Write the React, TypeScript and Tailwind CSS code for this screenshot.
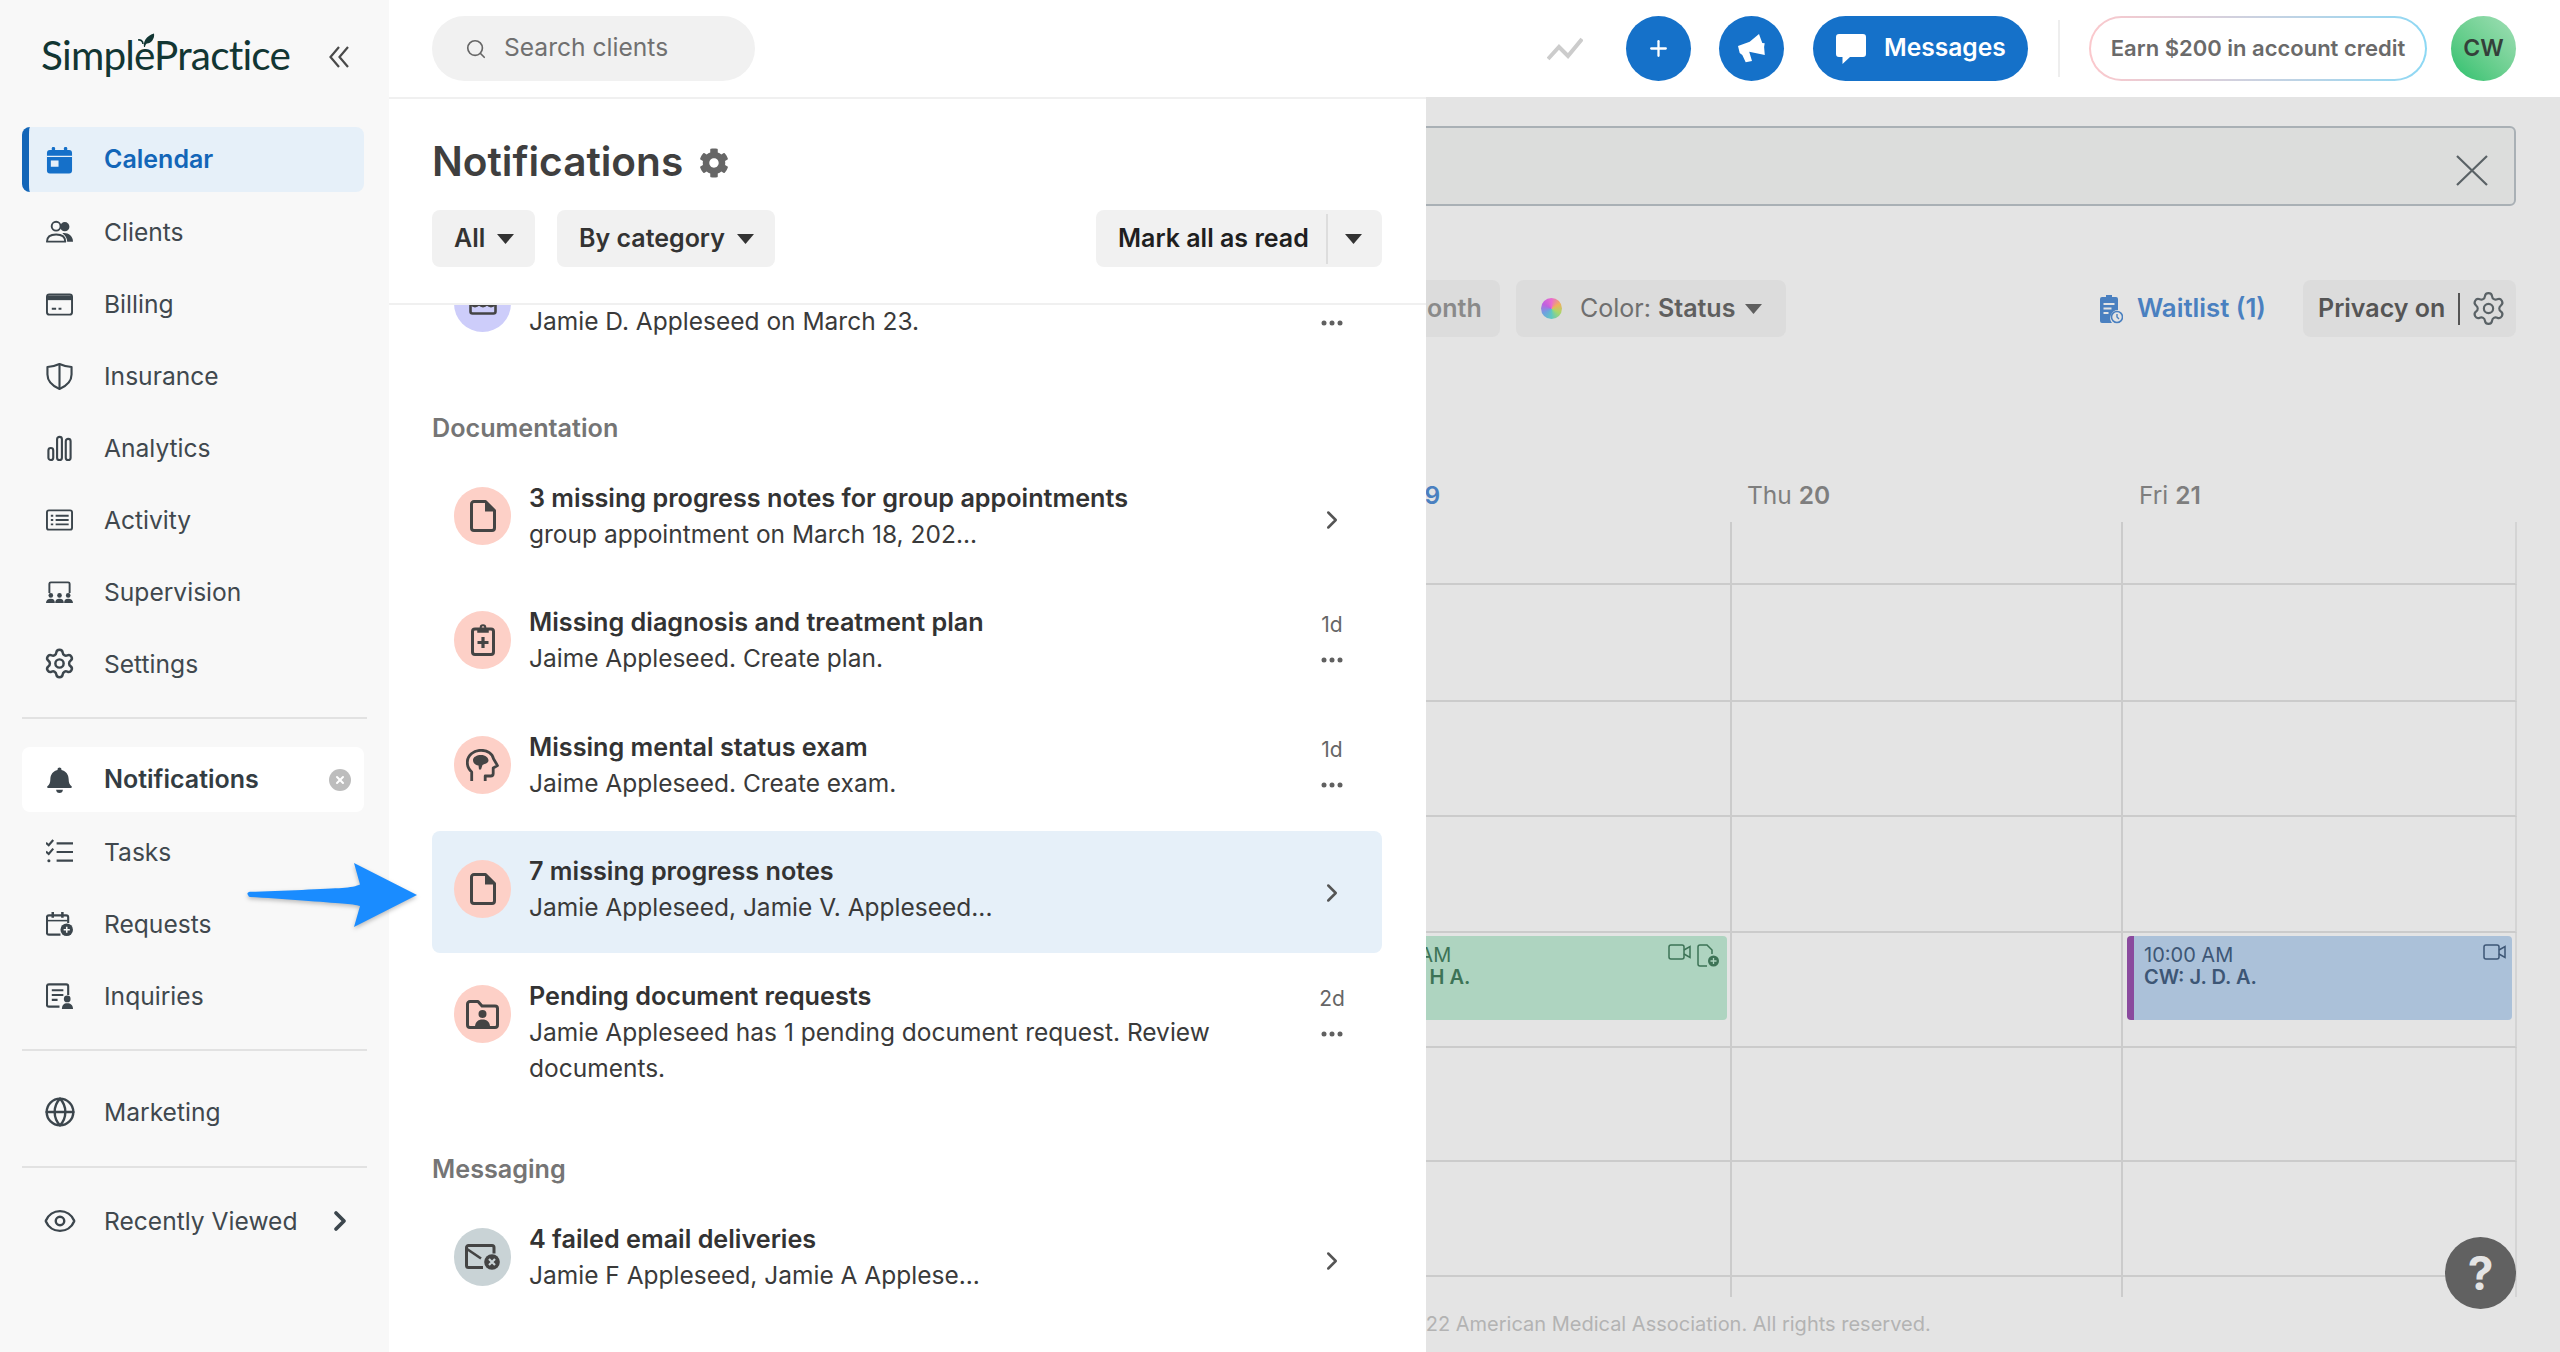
import React from "react";
import { ChevronRight, Eye, Globe, Search, Settings, Plus, X } from "lucide-react";
import { FaCog } from "react-icons/fa";

const INK = "#3c464d";

function Svg({ children, w = 28, h = 28, vb = "0 0 28 28", cls = "" }: { children: React.ReactNode; w?: number; h?: number; vb?: string; cls?: string }) {
  return (
    <svg width={w} height={h} viewBox={vb} fill="none" className={cls}>
      {children}
    </svg>
  );
}

const CalendarIcon = () => (
  <Svg>
    <rect x="1" y="3.5" width="26" height="24.5" rx="3" fill="#1570c9" />
    <rect x="6" y="0.5" width="3.4" height="6" rx="1.2" fill="#1570c9" />
    <rect x="18.6" y="0.5" width="3.4" height="6" rx="1.2" fill="#1570c9" />
    <rect x="1" y="9.6" width="26" height="1.3" fill="#e6f0f9" />
    <rect x="5" y="14.5" width="8" height="6.5" fill="#e6f0f9" />
  </Svg>
);
const ClientsIcon = () => (
  <Svg>
    <circle cx="10.5" cy="8" r="4.6" stroke={INK} strokeWidth="2" />
    <path d="M1 24c0-5 4-7.5 9.500-7.500s9.500 2.500 9.500 7.500z" stroke={INK} strokeWidth="2" strokeLinejoin="round" />
    <circle cx="19.500" cy="8.500" r="4.800" fill={INK} />
    <path d="M17 15.200c5.500-.8 11 2.300 11 8.800h-6c0-3.400-2-6.800-5-8.800z" fill={INK} />
  </Svg>
);
const BillingIcon = () => (
  <Svg>
    <rect x="1" y="4" width="26" height="21" rx="2.500" stroke={INK} strokeWidth="2" />
    <rect x="1" y="5" width="26" height="5" fill={INK} />
    <path d="M6 19h4.500M13 19h3" stroke={INK} strokeWidth="2" />
  </Svg>
);
const ShieldIcon = () => (
  <Svg>
    <path d="M14 1.500c4 1.800 8 2.800 12.500 3.200v7.800c0 7-5.500 12-12.500 15C7 24.500 1.500 19.500 1.500 12.500V4.700C6 4.300 10 3.300 14 1.500z" stroke={INK} strokeWidth="2.200" strokeLinejoin="round" />
    <path d="M14 2v25" stroke={INK} strokeWidth="2.200" />
  </Svg>
);
const AnalyticsIcon = () => (
  <Svg>
    <rect x="2.500" y="14" width="5" height="12.500" rx="2.500" stroke={INK} strokeWidth="2.200" />
    <rect x="11.500" y="2.500" width="5" height="24" rx="2.500" stroke={INK} strokeWidth="2.200" />
    <rect x="20.500" y="4.500" width="5" height="22" rx="2.500" stroke={INK} strokeWidth="2.200" />
  </Svg>
);
const ActivityIcon = () => (
  <Svg>
    <rect x="1" y="4" width="26" height="20" rx="2" stroke={INK} strokeWidth="2" />
    <path d="M5 9.500h2.500M5 14h2.500M5 18.500h2.500M10 9.500h13.500M10 14h13.500M10 18.500h13.500" stroke={INK} strokeWidth="2" />
  </Svg>
);
const SupervisionIcon = () => (
  <Svg>
    <path d="M3.500 15V5.500a1.500 1.500 0 0 1 1.500-1.500h18a1.500 1.500 0 0 1 1.500 1.500V15" stroke={INK} strokeWidth="2" />
    <circle cx="5" cy="17.500" r="2.400" fill={INK} />
    <circle cx="14" cy="17.500" r="2.400" fill={INK} />
    <circle cx="23" cy="17.500" r="2.400" fill={INK} />
    <path d="M0 25.500c0-3 2-4.500 5-4.500s4.200 1.500 4.200 4.500zM9.500 25.500c0-3 1.500-4.500 4.500-4.500s4.500 1.500 4.500 4.500zM18.800 25.500c0-3 1.200-4.500 4.200-4.500s5 1.500 5 4.500z" fill={INK} />
  </Svg>
);
const BellIcon = () => (
  <Svg>
    <path d="M14 1c1.100 0 2 .8 2 1.900v.8c4.800 1 7.500 5 7.500 9.600 0 3.500 1 5.600 3 7.200.7.600.3 1.800-.7 1.800H2.200c-1 0-1.400-1.200-.7-1.800 2-1.600 3-3.700 3-7.200 0-4.600 2.700-8.600 7.500-9.600v-.8C12 1.800 12.900 1 14 1z" fill={INK} />
    <path d="M10.500 24h7c0 2-1.500 3.500-3.500 3.500s-3.500-1.500-3.500-3.500z" fill={INK} />
  </Svg>
);
const TasksIcon = () => (
  <Svg>
    <path d="M0 4.500l2.800 2.500L7.500 1.500M0 13.500l2.800 2.500 4.700-5.500" stroke={INK} strokeWidth="2.200" />
    <circle cx="3" cy="23" r="1.600" fill={INK} />
    <path d="M11 5h17M11 14h17M11 23h17" stroke={INK} strokeWidth="2.200" />
  </Svg>
);
const RequestsIcon = () => (
  <Svg>
    <path d="M15 25H3a2 2 0 0 1-2-2V7a2 2 0 0 1 2-2h18a2 2 0 0 1 2 2v6" stroke={INK} strokeWidth="2.200" />
    <path d="M7 1.500v6M17 1.500v6" stroke={INK} strokeWidth="2.600" />
    <path d="M1.500 10.500h21" stroke={INK} strokeWidth="1.600" />
    <circle cx="21.500" cy="20" r="6.500" fill={INK} />
    <path d="M21.500 16.800v6.400M18.300 20h6.400" stroke="#f8f8f8" strokeWidth="1.600" />
  </Svg>
);
const InquiriesIcon = () => (
  <Svg>
    <path d="M14 25H3a2 2 0 0 1-2-2V4a2 2 0 0 1 2-2h18a2 2 0 0 1 2 2v9" stroke={INK} strokeWidth="2.200" />
    <path d="M6 8h12M6 13h12M6 18h6" stroke={INK} strokeWidth="2.200" />
    <circle cx="22" cy="17" r="3.500" fill={INK} />
    <path d="M16.500 27.500c0-4 2-6 5.500-6s6 2 6 6z" fill={INK} />
  </Svg>
);

function NavRow({ icon, label, active, current, trailing }: { icon: React.ReactNode; label: string; active?: boolean; current?: boolean; trailing?: React.ReactNode }) {
  const base = active
    ? "bg-[#e6f0f9] border-l-[7px] border-[#1366b8] text-[#1366b8] font-semibold text-[25px] pl-[17px]"
    : current
    ? "bg-white text-[#333c42] font-semibold text-[25px] pl-[24px]"
    : "text-[#40484e] text-[24.600px] pl-[24px]";
  return (
    <div className={`flex items-center h-[65px] rounded-[8px] pr-[13px] ${base}`}>
      <span className="w-[27px] h-[28px] flex items-center justify-center shrink-0">{icon}</span>
      <span className="ml-[31px] pt-[1px] flex-1 whitespace-nowrap">{label}</span>
      {trailing}
    </div>
  );
}

function Sidebar() {
  return (
    <aside className="w-[389px] shrink-0 bg-[#f8f8f8] h-full pl-[22px] pr-[22px] relative">
      <div className="h-[127px] flex items-start pt-[27px] pl-[19px] relative">
        <span className="relative text-[40.500px] leading-[56px] text-[#123633] font-['Lato',sans-serif] tracking-[-0.8px] whitespace-nowrap">
          SimplePractice
          <svg width="17" height="15" viewBox="0 0 17 15" className="absolute left-[97px] top-[6px]">
            <path d="M6 14C5 9 8 3 16 .5c1 5-3 10-7 10C9 10 7 12 7 14z" fill="#123633" />
            <path d="M0 7c2-.5 5 .5 5 4" stroke="#123633" strokeWidth="1.600" fill="none" />
          </svg>
        </span>
        <svg width="20" height="22" viewBox="0 0 20 22" fill="none" className="absolute left-[307px] top-[46px]">
          <path d="M10 1L1.500 11 10 21M19 1l-8.500 10L19 21" stroke="#4a4a4a" strokeWidth="2.200" />
        </svg>
      </div>
      <nav className="flex flex-col gap-[7px] w-[342px]">
        <NavRow active icon={<CalendarIcon />} label="Calendar" />
        <NavRow icon={<ClientsIcon />} label="Clients" />
        <NavRow icon={<BillingIcon />} label="Billing" />
        <NavRow icon={<ShieldIcon />} label="Insurance" />
        <NavRow icon={<AnalyticsIcon />} label="Analytics" />
        <NavRow icon={<ActivityIcon />} label="Activity" />
        <NavRow icon={<SupervisionIcon />} label="Supervision" />
        <NavRow icon={<Settings size={33} strokeWidth={1.800} color={INK} className="shrink-0" />} label="Settings" />
      </nav>
      <div className="w-[345px] h-[2px] bg-[#e2e2e2] mt-[21px] mb-[28px]" />
      <nav className="flex flex-col gap-[7px] w-[342px]">
        <NavRow
          current
          icon={<BellIcon />}
          label="Notifications"
          trailing={
            <span className="w-[22px] h-[22px] rounded-full bg-[#bdbdbd] flex items-center justify-center">
              <X size={12} strokeWidth={4} color="#ffffff" />
            </span>
          }
        />
        <NavRow icon={<TasksIcon />} label="Tasks" />
        <NavRow icon={<RequestsIcon />} label="Requests" />
        <NavRow icon={<InquiriesIcon />} label="Inquiries" />
      </nav>
      <div className="w-[345px] h-[2px] bg-[#e2e2e2] mt-[21px] mb-[28px]" />
      <div className="w-[342px]">
        <NavRow icon={<Globe size={32} strokeWidth={1.800} color={INK} className="shrink-0" />} label="Marketing" />
      </div>
      <div className="w-[345px] h-[2px] bg-[#e2e2e2] mt-[22px] mb-[20px]" />
      <div className="w-[342px]">
        <NavRow icon={<Eye size={34} strokeWidth={1.700} color={INK} className="shrink-0" />} label="Recently Viewed" trailing={<ChevronRight size={32} strokeWidth={2.800} color={INK} className="-mr-[5px]" />} />
      </div>
    </aside>
  );
}

function TopBar() {
  return (
    <header className="h-[97px] shrink-0 bg-white flex items-center pl-[43px] pr-[44px]">
      <div className="w-[323px] h-[65px] rounded-full bg-[#f1f1f1] flex items-center pl-[33px] text-[24.600px] text-[#707070]">
        <Search size={22} strokeWidth={1.800} color="#666666" />
        <span className="ml-[17px] pb-[2px]">Search clients</span>
      </div>
      <div className="ml-auto flex items-center">
        <svg width="36" height="24" viewBox="0 0 36 24" fill="none" className="mr-[43px]">
          <path d="M1 22L12 10l9 9L35 2" stroke="#cccccc" strokeWidth="4" />
        </svg>
        <span className="w-[65px] h-[65px] rounded-full bg-[#1571c9] flex items-center justify-center">
          <Plus size={25} strokeWidth={2.200} color="#ffffff" />
        </span>
        <span className="w-[65px] h-[65px] rounded-full bg-[#1571c9] flex items-center justify-center ml-[28px]">
          <svg width="28" height="29" viewBox="0 0 28 29">
            <path d="M0 12L11.700 7.700 21 0l1.800 5 1.500 4 2.400.3-.6 3.700.7 8-15.600-3.300L14 27l-6.300 1.300-3.400-7.300-2.600-2z" fill="#ffffff" />
          </svg>
        </span>
        <div className="w-[215px] h-[65px] rounded-full bg-[#1571c9] ml-[29px] flex items-center pl-[23px] text-white text-[24.600px] font-semibold">
          <svg width="30" height="30" viewBox="0 0 30 30">
            <path d="M3 0h24a3 3 0 0 1 3 3v17a3 3 0 0 1-3 3H14l-7.500 7v-7H3a3 3 0 0 1-3-3V3a3 3 0 0 1 3-3z" fill="#ffffff" />
          </svg>
          <span className="ml-[18px] pb-[2px]">Messages</span>
        </div>
        <div className="w-[2px] h-[57px] bg-[#eeeeee] ml-[30px]" />
        <div className="w-[338px] h-[65px] rounded-full ml-[29px] p-[2px] bg-linear-to-r from-[#fbc8cc] to-[#8cd8f4]">
          <div className="w-full h-full rounded-full bg-white flex items-center justify-center text-[22px] font-semibold text-[#6a6a6a] whitespace-nowrap">Earn $200 in account credit</div>
        </div>
        <div className="w-[65px] h-[65px] rounded-full ml-[24px] bg-linear-to-bl from-[#a0dfb6] to-[#1fc06c] flex items-center justify-center text-[23px] font-semibold text-[#34403a]">CW</div>
      </div>
    </header>
  );
}

const DOT = "#444444";

const DocIcon = () => (
  <Svg w={26} h={32} vb="0 0 26 32">
    <path d="M4 1.500h11.500L24.500 10.500V28a2.500 2.500 0 0 1-2.500 2.500H4A2.500 2.500 0 0 1 1.500 28V4A2.500 2.500 0 0 1 4 1.500z" stroke={DOT} strokeWidth="3" strokeLinejoin="round" />
    <path d="M15 1.500l10 10H15z" fill={DOT} />
  </Svg>
);
const ClipIcon = () => (
  <Svg w={24} h={32} vb="0 0 24 32">
    <rect x="1.500" y="5" width="21" height="25.500" rx="2.500" stroke={DOT} strokeWidth="3" />
    <path d="M7 5h10v3H7z" fill={DOT} stroke={DOT} strokeWidth="1.500" />
    <circle cx="12" cy="3.500" r="2.300" stroke={DOT} strokeWidth="2" />
    <path d="M12 13v11M6.500 18.500h11" stroke={DOT} strokeWidth="3.200" />
  </Svg>
);
const HeadIcon = () => (
  <Svg w={33} h={33} vb="0 0 33 33">
    <path d="M5.700 32v-9C3 20.500 1.300 17 1.300 13.500 1.300 6.500 7.500 1.300 15 1.300c6.500 0 11.500 3.500 12.500 8.500l4 6.800-4.300 2.400v5.500c0 1.500-1 2.500-2.500 2.500h-5.500V32" stroke={DOT} strokeWidth="2.800" strokeLinejoin="round" />
    <path d="M7 11c0-3 4-5 8-5 4.500 0 7.500 2.500 7.500 5.500 0 2-2 3-4 3.500l-2 1-1.500 4.500h-2l-.5-4c-2.500 0-5.500-2-5.500-5.500z" fill={DOT} />
  </Svg>
);
const FolderPersonIcon = () => (
  <Svg w={33} h={29} vb="0 0 33 29">
    <path d="M1.500 4A2.500 2.500 0 0 1 4 1.500h8l4 4.500h13a2.500 2.500 0 0 1 2.500 2.500V25a2.500 2.500 0 0 1-2.500 2.500H4A2.500 2.500 0 0 1 1.500 25z" stroke={DOT} strokeWidth="3" strokeLinejoin="round" />
    <circle cx="16.500" cy="14" r="4" fill={DOT} />
    <path d="M9 27c0-5 3-7.500 7.500-7.500S24 22 24 27z" fill={DOT} />
  </Svg>
);
const MailXIcon = () => (
  <Svg w={35} h={26} vb="0 0 35 26">
    <path d="M18 23.500H3.500a2 2 0 0 1-2-2V3.500a2 2 0 0 1 2-2H27a2 2 0 0 1 2 2v6" stroke={DOT} strokeWidth="3" />
    <path d="M2 5l14 9.500" stroke={DOT} strokeWidth="2.600" />
    <circle cx="27" cy="18" r="7.800" fill={DOT} />
    <path d="M24 15l6 6M30 15l-6 6" stroke="#c9d3d6" strokeWidth="2.200" />
  </Svg>
);
const BandIcon = () => (
  <Svg w={28} h={24} vb="0 0 28 24">
    <rect x="1.500" y="1.500" width="25" height="21" rx="2" stroke={DOT} strokeWidth="2.600" />
    <path d="M2 13c3 3 5 3 8 0 3 3 5 3 8 0 3 3 5 3 8 0" stroke={DOT} strokeWidth="2.600" />
  </Svg>
);

const Dots = () => (
  <svg width="22" height="6" viewBox="0 0 22 6">
    <circle cx="3" cy="3" r="2.500" fill="#606060" />
    <circle cx="11" cy="3" r="2.500" fill="#606060" />
    <circle cx="19" cy="3" r="2.500" fill="#606060" />
  </svg>
);

function Caret({ color = "#333333" }: { color?: string }) {
  return (
    <svg width="17" height="10" viewBox="0 0 17 10">
      <path d="M0 0h17l-8.500 10z" fill={color} />
    </svg>
  );
}

function Row({ icon, circle = "bg-[#fdd0c7]", title, sub, time, selected, cls = "" }: { icon: React.ReactNode; circle?: string; title?: string; sub: string; time?: string | null; selected?: boolean; cls?: string }) {
  return (
    <div className={`flex rounded-[8px] pt-[22px] pb-[28px] pl-[22px] pr-[30px] ${selected ? "bg-[#e6f0f9]" : ""} ${cls}`}>
      <span className={`w-[57px] h-[58px] mt-[7px] rounded-full shrink-0 flex items-center justify-center ${circle}`}>{icon}</span>
      <div className="ml-[18px] w-[755px] leading-[36px]">
        {title ? <div className="font-semibold text-[25.200px] text-[#333333]">{title}</div> : <div className="h-[36px]" />}
        <div className="text-[24.500px] text-[#3a3a3a]">{sub}</div>
      </div>
      <div className="ml-auto w-[40px] shrink-0 flex flex-col items-center">
        {time === undefined ? (
          <div className="h-[72px] flex items-center pt-[7px]">
            <ChevronRight size={30} strokeWidth={2} color="#555555" />
          </div>
        ) : (
          <>
            {time ? <div className="mt-[3px] h-[36px] flex items-center text-[21px] text-[#666666]">{time}</div> : <div className="mt-[3px] h-[36px]" />}
            <div className="h-[33px] flex items-center">
              <Dots />
            </div>
          </>
        )}
      </div>
    </div>
  );
}

function SectionLabel({ children, cls }: { children: React.ReactNode; cls: string }) {
  return <div className={`h-[36px] leading-[36px] text-[25.200px] font-semibold text-[#757575] mb-[12px] ${cls}`}>{children}</div>;
}

function Panel() {
  return (
    <section className="w-[1037px] shrink-0 h-full bg-white flex flex-col border-t-2 border-[#f0f0f0] overflow-hidden">
      <div className="h-[206px] shrink-0 border-b-2 border-[#f0f0f0] pl-[43px] pr-[44px] pt-[35px] relative z-10 bg-white">
        <div className="flex items-center h-[56px]">
          <h1 className="text-[40.600px] font-semibold text-[#3f3f3f] leading-[56px]">Notifications</h1>
          <FaCog size={30} color="#666666" className="ml-[16px] mt-[2px]" />
        </div>
        <div className="flex mt-[20px] text-[25px] font-semibold text-[#333333]">
          <div className="h-[57px] w-[103px] rounded-[8px] bg-[#f1f1f1] flex items-center pl-[22px]">
            All
            <span className="ml-[12px] flex">
              <Caret />
            </span>
          </div>
          <div className="h-[57px] w-[218px] rounded-[8px] bg-[#f1f1f1] flex items-center pl-[22px] ml-[22px]">
            By category
            <span className="ml-[12px] flex">
              <Caret />
            </span>
          </div>
          <div className="ml-auto h-[57px] w-[286px] rounded-[8px] bg-[#f1f1f1] flex items-center pl-[22px] text-[#1f1f1f]">
            <span className="whitespace-nowrap">Mark all as read</span>
            <span className="ml-auto w-[2px] h-[50px] bg-[#dddddd]" />
            <span className="w-[54px] flex justify-center pr-[4px]">
              <Caret />
            </span>
          </div>
        </div>
      </div>
      <div className="flex-1 min-h-0 pl-[43px] pr-[44px]">
        <Row cls="-mt-[60px]" circle="bg-[#cdcdfa]" icon={<BandIcon />} sub="Jamie D. Appleseed on March 23." time="" />
        <SectionLabel cls="mt-[43px]">Documentation</SectionLabel>
        <div className="flex flex-col gap-[2px]">
          <Row icon={<DocIcon />} title="3 missing progress notes for group appointments" sub="group appointment on March 18, 202..." />
          <Row icon={<ClipIcon />} title="Missing diagnosis and treatment plan" sub="Jaime Appleseed. Create plan." time="1d" />
          <Row cls="mt-[1px]" icon={<HeadIcon />} title="Missing mental status exam" sub="Jaime Appleseed. Create exam." time="1d" />
          <Row selected icon={<DocIcon />} title="7 missing progress notes" sub="Jamie Appleseed, Jamie V. Appleseed..." />
          <Row cls="mt-[1px]" icon={<FolderPersonIcon />} title="Pending document requests" sub="Jamie Appleseed has 1 pending document request. Review documents." time="2d" />
        </div>
        <SectionLabel cls="mt-[37px]">Messaging</SectionLabel>
        <Row circle="bg-[#c9d3d6]" icon={<MailXIcon />} title="4 failed email deliveries" sub="Jamie F Appleseed, Jamie A Applese..." />
      </div>
    </section>
  );
}

const cell = "border-r-2 border-b-2 border-[#cbcbcb]";

const VideoIcon = ({ color }: { color: string }) => (
  <svg width="23" height="16" viewBox="0 0 23 16" fill="none">
    <rect x="1" y="1" width="15" height="14" rx="2" stroke={color} strokeWidth="1.500" />
    <path d="M16 6l6-3.500v11L16 10" stroke={color} strokeWidth="1.500" />
  </svg>
);

function CalendarArea() {
  const rows = [0, 1, 2, 3, 4, 5, 6, 7];
  return (
    <main className="flex-1 min-w-0 h-full overflow-hidden bg-[#e4e4e4] pr-[44px]">
      <div className="mt-[29px] h-[80px] -ml-[10px] rounded-[6px] border-2 border-[#a9b0b5] bg-[#dcdddc] flex items-center justify-end pr-[26px]">
        <svg width="32" height="31" viewBox="0 0 32 31" fill="none" className="mt-[9px]">
          <path d="M1 1l30 29M31 1L1 30" stroke="#5a6266" strokeWidth="2.200" />
        </svg>
      </div>
      <div className="mt-[74px] h-[57px] -ml-[40px] flex items-center text-[25px]">
        <div className="w-[114px] h-[57px] rounded-[8px] bg-[#dcdcdc] flex items-center pl-[18px] font-semibold text-[#8a8a8a]">Month</div>
        <div className="w-[270px] h-[57px] rounded-[8px] bg-[#dcdcdc] ml-[16px] flex items-center pl-[25px] text-[#6f6f6f]">
          <span className="w-[21px] h-[21px] rounded-full bg-[conic-gradient(#e96bd0,#f0b05e,#a7d86b,#5fc8c0,#6fa0e0,#c060e0,#e96bd0)]" />
          <span className="ml-[18px]">Color:&nbsp;</span>
          <span className="font-semibold text-[#5f5f5f]">Status</span>
          <span className="ml-[10px] flex">
            <Caret color="#5f5f5f" />
          </span>
        </div>
        <div className="ml-auto flex items-center font-semibold text-[25.800px] text-[#4a80c0]">
          <svg width="24" height="30" viewBox="0 0 24 30">
            <path d="M3 3h4V1h6v2h4a2 2 0 0 1 2 2v11a8 8 0 0 0-6 13H3a2 2 0 0 1-2-2V5a2 2 0 0 1 2-2z" fill="#4a80c0" />
            <path d="M4.500 10h11M4.500 14.500h8M4.500 19h5" stroke="#e4e4e4" strokeWidth="1.800" />
            <circle cx="18" cy="23" r="5.500" fill="none" stroke="#4a80c0" strokeWidth="1.600" />
            <path d="M18 20v3l2 2" stroke="#4a80c0" strokeWidth="1.400" fill="none" />
          </svg>
          <span className="ml-[14px]">Waitlist (1)</span>
        </div>
        <div className="ml-[37px] w-[213px] h-[57px] rounded-[8px] bg-[#dcdcdc] flex items-center pl-[15px] font-semibold text-[#555555]">
          <span className="whitespace-nowrap">Privacy on</span>
          <span className="ml-[13px] w-[2px] h-[32px] bg-[#555555]" />
          <Settings size={37} strokeWidth={1.400} color="#5a6266" className="ml-[10px] shrink-0" />
        </div>
      </div>
      <div className="mt-[140px] -ml-[85px] h-[36px] mb-[9px] grid grid-cols-[391px_391px_394px] text-[24.500px] leading-[36px] text-[#7e7e7e]">
        <div className="pl-[14px] text-[#4a80c0]">
          Wed <span className="font-semibold">19</span>
        </div>
        <div className="pl-[15px]">
          Thu <span className="font-semibold">20</span>
        </div>
        <div className="pl-[16px]">
          Fri <span className="font-semibold">21</span>
        </div>
      </div>
      <div className="-ml-[85px] grid grid-cols-[391px_391px_394px] grid-rows-[63px_117px_115px_116px_115px_114px_115px_20px]">
        {rows.map((r) => (
          <React.Fragment key={r}>
            <div className={`${r === 7 ? "border-r-2 border-[#cbcbcb]" : cell} min-w-0`}>
              {r === 4 && (
                <div className="ml-[4px] mr-[3px] mt-[3px] h-[84px] rounded-[4px] bg-[#aed4c0] pl-[17px] pr-[7px] pt-[8px] flex justify-between text-[20px] leading-[22px] text-[#3d7356]">
                  <div>
                    <div>10:00 AM</div>
                    <div className="font-semibold">CW: J. H A.</div>
                  </div>
                  <div className="flex items-start gap-[6px]">
                    <VideoIcon color="#3d7356" />
                    <svg width="23" height="24" viewBox="0 0 23 24" fill="none">
                      <path d="M10 22H3a2 2 0 0 1-2-2V3a2 2 0 0 1 2-2h7l5 5v4" stroke="#3d7356" strokeWidth="1.500" />
                      <circle cx="16.500" cy="17" r="5.500" fill="#3d7356" />
                      <path d="M16.500 14v6M13.500 17h6" stroke="#aed4c0" strokeWidth="1.300" />
                    </svg>
                  </div>
                </div>
              )}
            </div>
            <div className={`${r === 7 ? "border-r-2 border-[#cbcbcb]" : cell}`} />
            <div className={`${r === 7 ? "border-r-2 border-[#d4d4d4]" : "border-r-2 border-b-2 border-r-[#d4d4d4] border-b-[#cbcbcb]"} min-w-0`}>
              {r === 4 && (
                <div className="ml-[4px] mr-[3px] mt-[3px] h-[84px] rounded-[4px] bg-[#abc1d9] border-l-[7px] border-[#8a4a9e] pl-[10px] pr-[6px] pt-[8px] flex justify-between text-[20px] leading-[22px] text-[#3d5675]">
                  <div>
                    <div>10:00 AM</div>
                    <div className="font-semibold">CW: J. D. A.</div>
                  </div>
                  <VideoIcon color="#3d5675" />
                </div>
              )}
            </div>
          </React.Fragment>
        ))}
      </div>
      <div className="h-[54px] flex items-center -ml-[49px] text-[20px] text-[#b3b3b3] whitespace-nowrap">© 2022 American Medical Association. All rights reserved.</div>
    </main>
  );
}

function Arrow() {
  return (
    <svg width="175" height="70" viewBox="0 0 175 70" className="absolute left-[246px] top-[861px] z-20 drop-shadow-[0_2px_2px_rgba(0,0,0,0.25)]">
      <path d="M2 34c-1.500-1.500 0-3 2-3.200 30-.8 78-3 92-3.800 8-.5 15-2 18-3.500L108 2l63 32-63 32 6-21c-3-1-10-2-18-2.500-14-1-62-5-92-6.500C3 36 2.500 35 2 34z" fill="#1a8cff" />
    </svg>
  );
}

export default function App() {
  return (
    <div className="relative w-[2560px] h-[1352px] overflow-hidden flex bg-white font-['Inter',sans-serif]">
      <Sidebar />
      <div className="flex-1 min-w-0 flex flex-col h-full">
        <TopBar />
        <div className="flex-1 min-h-0 flex">
          <Panel />
          <CalendarArea />
        </div>
      </div>
      <Arrow />
      <div className="absolute right-[44px] bottom-[43px] w-[71px] h-[72px] rounded-full bg-[#616161] flex items-center justify-center text-[46px] font-bold text-[#e4e4e4] z-20">?</div>
    </div>
  );
}
